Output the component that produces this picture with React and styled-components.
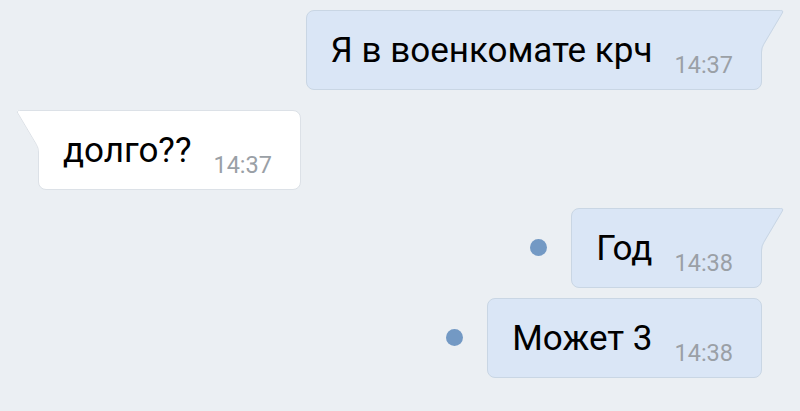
import React from "react";
import styled, { createGlobalStyle } from "styled-components";

const Global = createGlobalStyle`
  html, body { margin: 0; padding: 0; background: #ebeff3; }
  body { font-family: Roboto, "Noto Sans", "Liberation Sans", sans-serif; }
`;

const Chat = styled.div`
  width: 800px;
  height: 411px;
  box-sizing: border-box;
  padding: 10px 38px 0 38px;
  display: flex;
  flex-direction: column;
  overflow: hidden;
`;

const Row = styled.div`
  display: flex;
  align-items: center;
  justify-content: ${(p) => (p.$out ? "flex-end" : "flex-start")};
  margin-top: ${(p) => p.$gap}px;
`;

const Dot = styled.div`
  width: 17px;
  height: 17px;
  border-radius: 50%;
  background: #7399c4;
  margin-right: 24px;
  margin-top: -2px;
`;

const Bubble = styled.div`
  position: relative;
  box-sizing: border-box;
  height: 80px;
  display: flex;
  align-items: flex-start;
  padding: 20px 28px 0 24px;
  background: ${(p) => (p.$out ? "#dae6f6" : "#ffffff")};
  border: 1px solid ${(p) => (p.$out ? "#c9d6e4" : "#dce1e7")};
  border-radius: 8px;
  ${(p) =>
    p.$tail
      ? p.$out
        ? "border-top-right-radius: 0;"
        : "border-top-left-radius: 0;"
      : ""}
`;

const Text = styled.span`
  font-size: 35px;
  line-height: 40px;
  color: #000;
  white-space: nowrap;
`;

const Time = styled.span`
  font-size: 23.5px;
  line-height: 28px;
  color: #9aa0a6;
  margin-left: 22px;
  margin-top: 20px;
  white-space: nowrap;
`;

const TailSvg = styled.svg`
  position: absolute;
  top: -1px;
  width: 24px;
  height: 46px;
  overflow: visible;
  ${(p) =>
    p.$out
      ? "left: 100%;"
      : "right: 100%; transform: scaleX(-1);"}
`;

function Tail({ out }) {
  const fill = out ? "#dae6f6" : "#ffffff";
  const stroke = out ? "#c9d6e4" : "#dce1e7";
  return (
    <TailSvg $out={out} viewBox="0 0 24 46">
      <path
        d="M0,0 L19.5,0 Q23.5,0 21.6,3.2 L3.2,34.4 Q1,38 1,42 L1,46 L0,46 Z"
        fill={fill}
      />
      <path
        d="M0,0.5 L19.5,0.5 Q22.8,0.5 21.2,3.2 L2.8,34.2 Q0.5,38 0.5,42 L0.5,46"
        fill="none"
        stroke={stroke}
        strokeWidth="1"
      />
    </TailSvg>
  );
}

const messages = [
  { out: true, text: "Я в военкомате крч", time: "14:37", tail: true, gap: 0 },
  { out: false, text: "долго??", time: "14:37", tail: true, gap: 20 },
  { out: true, text: "Год", time: "14:38", tail: true, gap: 18, dot: true },
  { out: true, text: "Может 3", time: "14:38", tail: false, gap: 10, dot: true },
];

export default function App() {
  return (
    <>
      <Global />
      <Chat>
        {messages.map((m, i) => (
          <Row key={i} $out={m.out} $gap={m.gap}>
            {m.dot && <Dot />}
            <Bubble $out={m.out} $tail={m.tail}>
              {m.tail && <Tail out={m.out} />}
              <Text>{m.text}</Text>
              <Time>{m.time}</Time>
            </Bubble>
          </Row>
        ))}
      </Chat>
    </>
  );
}
